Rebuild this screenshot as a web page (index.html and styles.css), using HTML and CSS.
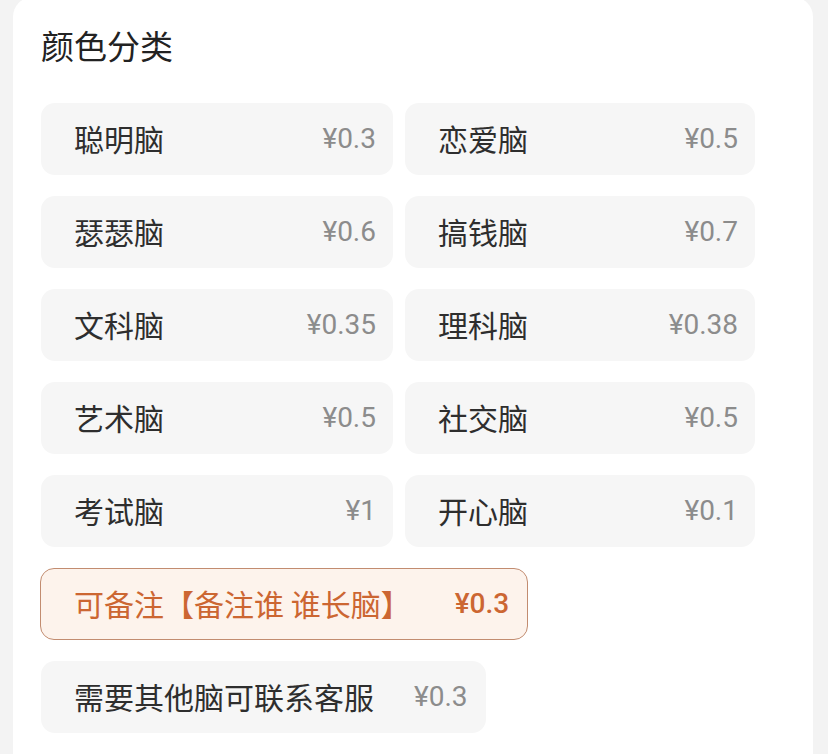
FILE: index.html
```html
<!DOCTYPE html>
<html lang="zh-CN">
<head>
<meta charset="utf-8">
<title>颜色分类</title>
<link rel="stylesheet" href="styles.css">
</head>
<body>
<div class="card">
  <h2 class="title">颜色分类</h2>
  <div class="grid">
    <div class="item"><span class="name">聪明脑</span><span class="price">¥0.3</span></div>
    <div class="item"><span class="name">恋爱脑</span><span class="price">¥0.5</span></div>
    <div class="item"><span class="name">瑟瑟脑</span><span class="price">¥0.6</span></div>
    <div class="item"><span class="name">搞钱脑</span><span class="price">¥0.7</span></div>
    <div class="item"><span class="name">文科脑</span><span class="price">¥0.35</span></div>
    <div class="item"><span class="name">理科脑</span><span class="price">¥0.38</span></div>
    <div class="item"><span class="name">艺术脑</span><span class="price">¥0.5</span></div>
    <div class="item"><span class="name">社交脑</span><span class="price">¥0.5</span></div>
    <div class="item"><span class="name">考试脑</span><span class="price">¥1</span></div>
    <div class="item"><span class="name">开心脑</span><span class="price">¥0.1</span></div>
    <div class="item wide active"><span class="name">可备注【备注谁 谁长脑】</span><span class="price">¥0.3</span></div>
    <div class="item wide"><span class="name">需要其他脑可联系客服</span><span class="price">¥0.3</span></div>
  </div>
</div>
</body>
</html>
```
FILE: styles.css
```css
html, body {
  margin: 0;
  padding: 0;
}
body {
  background: #f3f3f3;
  font-family: Roboto, "Noto Sans CJK SC", sans-serif;
  height: 754px;
  overflow: hidden;
}
.card {
  box-sizing: border-box;
  background: #ffffff;
  margin: -3px 15px 0 13px;
  border-radius: 20px 20px 0 0;
  padding: 28px 28px 0 28px;
  height: 757px;
}
.title {
  margin: 0;
  font-family: "Noto Sans CJK SC", sans-serif;
  font-size: 33px;
  font-weight: 400;
  line-height: 40px;
  color: #222222;
}
.grid {
  margin-top: 38px;
  display: grid;
  grid-template-columns: 352px 350px;
  column-gap: 12px;
  row-gap: 21px;
}
.item {
  box-sizing: border-box;
  height: 72px;
  background: #f6f6f6;
  border-radius: 14px;
  display: flex;
  align-items: center;
  justify-content: space-between;
  padding: 0 17px 0 33px;
}
.name {
  font-family: "Noto Sans CJK SC", sans-serif;
  font-size: 30px;
  line-height: 36px;
  padding-bottom: 3px;
  color: #2e2e2e;
  white-space: nowrap;
}
.price {
  font-family: Roboto, sans-serif;
  font-size: 28px;
  line-height: 36px;
  color: #8c8c8c;
  white-space: nowrap;
}
.wide {
  grid-column: 1 / -1;
  justify-self: start;
  gap: 40px;
  padding-right: 18px;
}
.active {
  background: #fdf3ec;
  border: 1px solid #c28c70;
  padding-left: 33px;
  gap: 44px;
  margin-left: -1px;
}
.active .name {
  color: #cc6632;
}
.active .price {
  color: #cc6632;
  font-weight: 500;
}
```
